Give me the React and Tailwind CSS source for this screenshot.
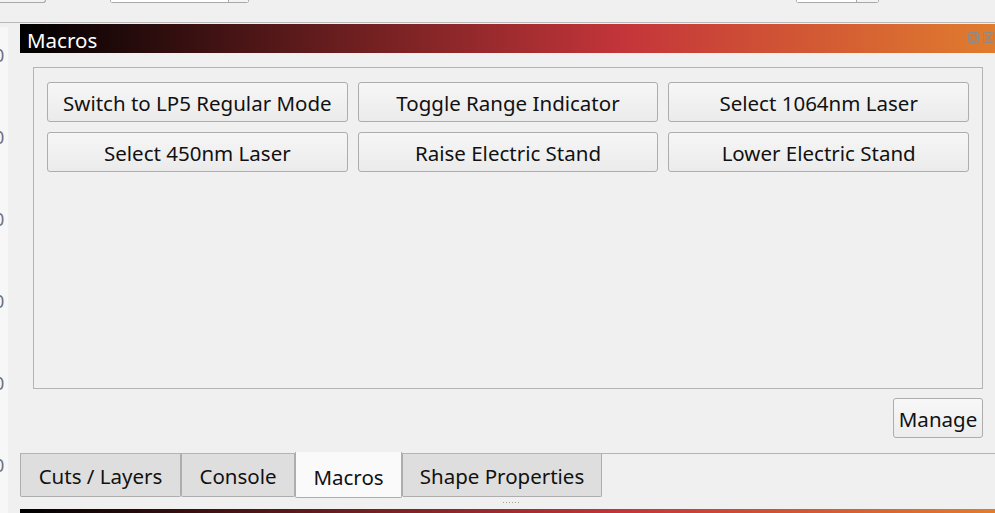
import React from "react";

const FONT = { fontFamily: '"Noto Sans", "Open Sans", sans-serif' };

function MacroButton({ label }) {
  return (
    <button className="h-[40px] w-full rounded-[3px] border border-[#adadad] bg-[linear-gradient(to_bottom,#f6f6f6,#ebebeb)] text-[20.5px] leading-none text-[#111] flex items-center justify-center pt-[3px]">
      {label}
    </button>
  );
}

function FloatIcon() {
  return (
    <svg width="11" height="11" viewBox="0 0 11 11" fill="none" stroke="#8a8a8a" strokeWidth="1">
      <rect x="0.5" y="0.5" width="10" height="10" rx="1" />
      <circle cx="5.5" cy="5.8" r="2.8" />
      <path d="M5.5 3 L8.5 3 L8.5 6" />
    </svg>
  );
}

function CloseIcon() {
  return (
    <svg width="11" height="11" viewBox="0 0 11 11" fill="none" stroke="#8a8a8a" strokeWidth="1">
      <rect x="0.5" y="0.5" width="10" height="10" rx="1" />
      <path d="M2.5 2.5 L8.5 8.5 M8.5 2.5 L2.5 8.5" strokeWidth="1.4" />
    </svg>
  );
}

function Tab({ label, width, selected }) {
  if (selected) {
    return (
      <div
        className="mt-[-2px] h-[46px] border border-t-0 border-[#adadad] bg-[#fafafa] flex items-center justify-center text-[20.5px] leading-none text-[#111] rounded-b-[2px] relative z-10"
        style={{ width }}
      >
        <span className="mt-[5px]">{label}</span>
      </div>
    );
  }
  return (
    <div
      className="h-[43px] border border-t-0 border-[#adadad] bg-[#dedede] flex items-center justify-center text-[20.5px] leading-none text-[#111] rounded-b-[2px]"
      style={{ width }}
    >
      <span className="mt-[3px]">{label}</span>
    </div>
  );
}

export default function App() {
  const buttons = [
    "Switch to LP5 Regular Mode",
    "Toggle Range Indicator",
    "Select 1064nm Laser",
    "Select 450nm Laser",
    "Raise Electric Stand",
    "Lower Electric Stand",
  ];
  const gradient =
    "bg-[linear-gradient(to_right,#000000_0%,#6a1e1f_33%,#c4353a_62%,#e07c2e_100%)]";

  return (
    <div className="w-[995px] h-[513px] overflow-hidden bg-[#f0f0f0] flex flex-col" style={FONT}>
      {/* top strip */}
      <div className="h-[22px] flex items-start shrink-0">
        <div className="w-[46px] h-[3px] border-r border-b border-[#a8a8a8] rounded-br-[3px] bg-[#f3f3f3]" />
        <div className="ml-[64px] w-[139px] h-[3px] border-l border-r border-b border-[#a8a8a8] rounded-b-[3px] flex">
          <div className="w-[118px] bg-white border-r border-[#a8a8a8]" />
          <div className="flex-1 bg-[#f3f3f3]" />
        </div>
        <div className="ml-[547px] w-[83px] h-[3px] border-l border-r border-b border-[#a8a8a8] rounded-b-[3px] flex">
          <div className="w-[60px] bg-white border-r border-[#a8a8a8]" />
          <div className="flex-1 bg-[#f3f3f3]" />
        </div>
      </div>
      <div className="h-px bg-[#b8b8b8] shrink-0" />

      {/* main row */}
      <div className="flex flex-1 min-h-0">
        {/* ruler */}
        <div className="w-[8px] flex flex-col">
          <div className="h-[4px]" />
          <div className="flex-1 bg-[#f7f7f7] overflow-hidden flex flex-col pt-[21px] gap-[68px]">
            {[0, 1, 2, 3, 4, 5].map((i) => (
              <div key={i} className="h-[14px] leading-[14px] text-[18px] text-[#6d7080] ml-[-6px]">
                0
              </div>
            ))}
          </div>
        </div>
        <div className="w-[12px]" />

        {/* dock */}
        <div className="flex-1 flex flex-col pt-px">
          <div className={`h-[29px] ${gradient} flex items-center justify-between pl-[7px] pr-[1px]`}>
            <span className="text-white text-[20.5px] leading-none mt-[4px]">Macros</span>
            <div className="flex items-center gap-[4px] mb-[2px]">
              <FloatIcon />
              <CloseIcon />
            </div>
          </div>

          <div className="pl-[13px] pr-[12px] pt-[14px] flex flex-col">
            <div className="h-[322px] border border-[#b4b4b4] px-[13px] pt-[14px]">
              <div className="grid grid-cols-3 gap-x-[10px] gap-y-[10px]">
                {buttons.map((b) => (
                  <MacroButton key={b} label={b} />
                ))}
              </div>
            </div>
            <div className="flex justify-end mt-[9px]">
              <button className="h-[40px] w-[90px] rounded-[3px] border border-[#adadad] bg-[linear-gradient(to_bottom,#f8f8f8,#ececec)] text-[20.5px] leading-none text-[#111] flex items-center justify-center pt-[3px]">
                Manage
              </button>
            </div>
          </div>

          {/* tab bar */}
          <div className="mt-[15px] border-t border-[#b4b4b4] flex items-start">
            <Tab label="Cuts / Layers" width={161} />
            <Tab label="Console" width={114} />
            <Tab label="Macros" width={107} selected />
            <Tab label="Shape Properties" width={200} />
          </div>

          <div className="flex-1 flex flex-col">
            <div className="flex-1 flex items-center justify-center pl-[6px]">
              <div className="flex gap-[2px] mt-[-2px]">
                {[0, 1, 2, 3, 4, 5].map((i) => (
                  <div key={i} className="w-px h-px bg-[#a0a0a0]" />
                ))}
              </div>
            </div>
            <div className={`h-[4px] ${gradient}`} />
          </div>
        </div>
      </div>
    </div>
  );
}
